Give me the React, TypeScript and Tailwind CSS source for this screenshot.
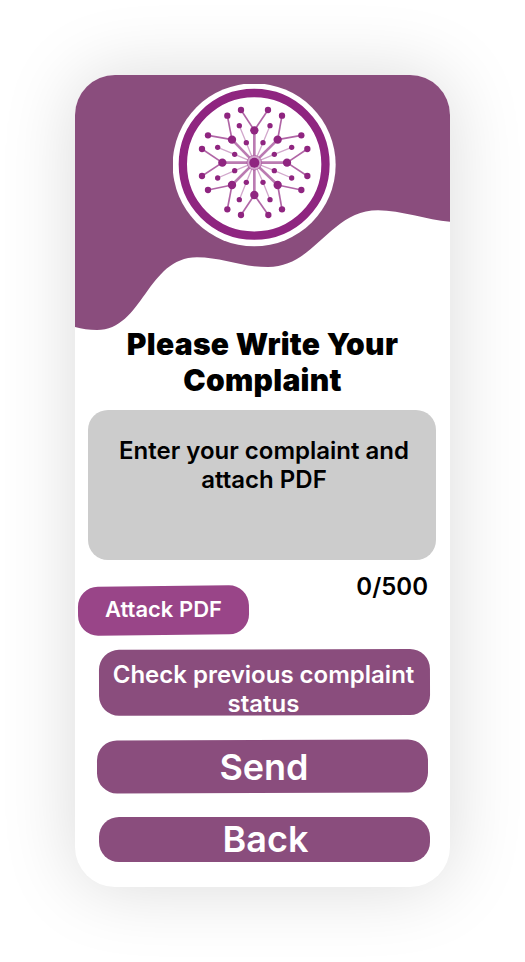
const PLUM = "#8F2580";

type Branch = { hub: [number, number]; tips: [number, number][] };

const branches: Branch[] = [
  { hub: [268, 166], tips: [[228, 105], [309, 105]] },
  { hub: [338, 194], tips: [[351, 122], [409, 181]] },
  { hub: [366, 263], tips: [[427, 222], [427, 303]] },
  { hub: [338, 330], tips: [[409, 345], [351, 403]] },
  { hub: [268, 360], tips: [[310, 420], [228, 420]] },
  { hub: [201, 330], tips: [[187, 403], [129, 345]] },
  { hub: [172, 263], tips: [[111, 303], [111, 222]] },
  { hub: [201, 194], tips: [[129, 181], [187, 122]] },
];

const sprigs: [number, number, number, number][] = [
  [294, 203, 315, 152],
  [328, 238, 380, 217],
  [328, 287, 380, 309],
  [294, 322, 315, 374],
  [244, 322, 223, 374],
  [209, 287, 158, 309],
  [209, 238, 158, 217],
  [244, 203, 223, 152],
];

function Logo() {
  return (
    <svg viewBox="24 27 489 489" className="ml-[98px] mt-[9px] block size-[163px]">
      <circle cx="267.5" cy="269.5" r="244.5" fill="#fff" />
      <circle cx="267.5" cy="268" r="214" fill="none" stroke={PLUM} strokeWidth="25" />
      {sprigs.map(([x1, y1, x2, y2]) => (
        <g key={`${x1}-${y1}`} fill={PLUM}>
          <path d={`M268 263L${x1} ${y1}L${x2} ${y2}`} fill="none" stroke={PLUM} strokeWidth="4" opacity=".4" />
          <circle cx={x1} cy={y1} r="8" />
          <circle cx={x2} cy={y2} r="8" />
        </g>
      ))}
      {branches.map(({ hub, tips }) => (
        <g key={hub.join()} fill={PLUM} stroke={PLUM}>
          <path d={`M268 263L${hub[0]} ${hub[1]}`} strokeWidth="8" opacity=".6" />
          {tips.map(([x, y]) => (
            <g key={`${x}-${y}`}>
              <path d={`M${hub[0]} ${hub[1]}L${x} ${y}`} strokeWidth="5" opacity=".7" />
              <circle cx={x} cy={y} r="9.5" stroke="none" />
            </g>
          ))}
          <circle cx={hub[0]} cy={hub[1]} r="12.5" stroke="none" />
        </g>
      ))}
      <circle cx="268" cy="263" r="22" fill="#d3a6cd" stroke={PLUM} strokeWidth="2" strokeOpacity=".6" />
      <circle cx="268" cy="263" r="15" fill={PLUM} />
    </svg>
  );
}

export default function App() {
  return (
    <div className="flex h-[962px] w-[525px] justify-center bg-white pt-[75px] font-['Inter',sans-serif]">
      <main className="flex h-[812px] w-[375px] flex-col overflow-hidden rounded-[40px] bg-white shadow-[0_0_75px_rgba(0,0,0,0.15)]">
        <header className="relative h-[251px] shrink-0">
          <svg viewBox="0 0 375 256" className="absolute left-0 top-0 h-[256px] w-[375px]">
            <path
              fill="#8A4D7D"
              d="M0 0H375V146.7C352 145 326 135.3 303 135.3C255 135.3 240 192 193 192C165 192 147 182.2 122 182.2C72 182.2 68 255 22 255C14 255 7 254 0 252Z"
            />
          </svg>
          <div className="relative flex">
            <Logo />
          </div>
        </header>
        <h1 className="text-center text-[30px] font-black leading-9 tracking-[0.3px] text-black">
          Please Write Your
          <br />
          Complaint
        </h1>
        <div className="ml-[13px] mt-3 h-[150px] w-[348px] shrink-0 rounded-[20px] bg-[#CCCCCC] pt-[26px] pl-1 text-center text-2xl font-semibold leading-[29px] text-black">
          Enter your complaint and
          <br />
          attach PDF
        </div>
        <div className="flex h-[89px] shrink-0 items-start justify-between pl-[3px] pr-[22px]">
          <button className="mt-[26px] h-[49px] w-[171px] -rotate-[0.66deg] rounded-[20px] bg-[#994588] pb-0.5 text-[22px] font-semibold leading-[27px] text-white">
            <span className="block rotate-[0.66deg]">Attack PDF</span>
          </button>
          <span className="mt-3 text-2xl font-semibold leading-[29px] text-black">0/500</span>
        </div>
        <button className="ml-6 h-[66px] w-[331px] shrink-0 translate-y-[0.4px] -rotate-[0.17deg] rounded-[20px] bg-[#8A4D7D] pt-[11px] text-2xl font-semibold leading-[29px] text-white">
          <span className="block rotate-[0.17deg] pr-[2px]">
            Check previous complaint
            <br />
            status
          </span>
        </button>
        <button className="ml-[22px] mt-[25px] h-[53px] w-[331px] shrink-0 -rotate-[0.17deg] rounded-[20px] bg-[#8A4D7D] text-4xl font-semibold leading-[44px] text-white">
          <span className="block rotate-[0.17deg] pl-[3px]">Send</span>
        </button>
        <button className="ml-6 mt-[24px] h-[45px] w-[331px] shrink-0 rounded-[20px] bg-[#8A4D7D] pb-px pl-[2px] text-4xl font-semibold leading-[44px] text-white">
          Back
        </button>
      </main>
    </div>
  );
}
